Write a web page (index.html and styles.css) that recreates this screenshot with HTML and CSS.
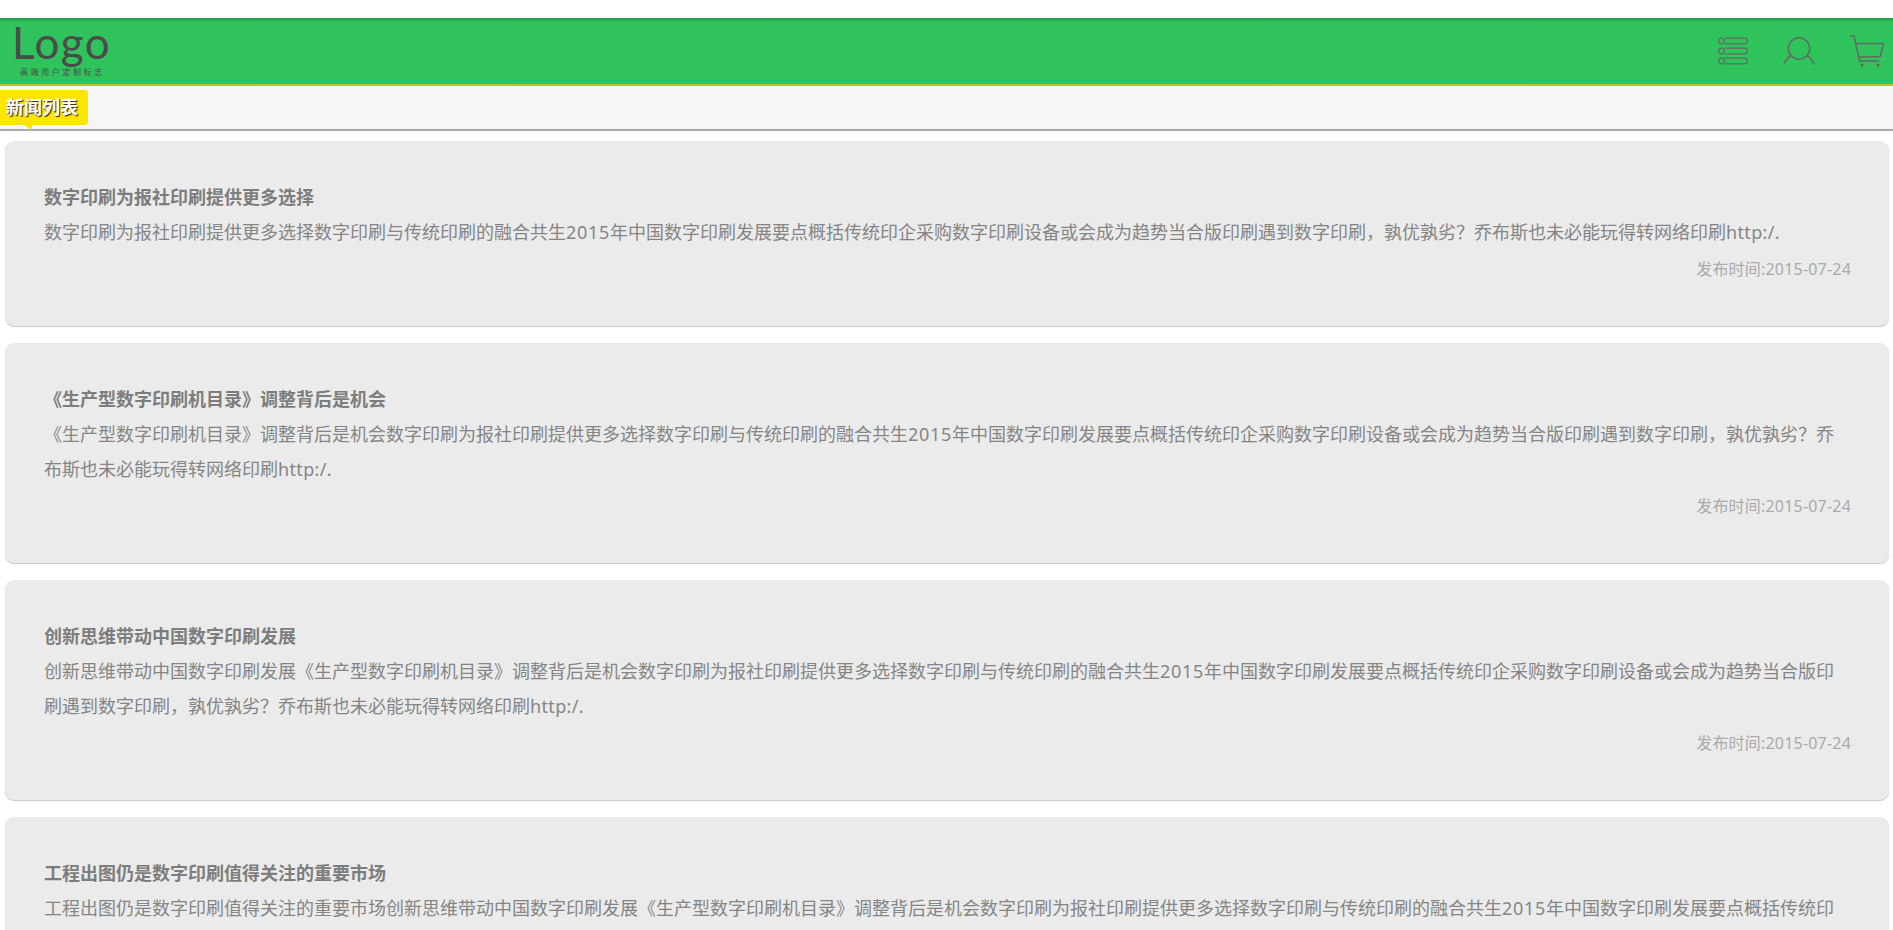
FILE: index.html
```html
<!DOCTYPE html>
<html lang="zh-CN">
<head>
<meta charset="utf-8">
<title>新闻列表</title>
<link rel="stylesheet" href="styles.css">
</head>
<body>
<header class="header">
  <div class="logo">
    <div class="logo-word">Logo</div>
    <div class="logo-sub">高端用户定制标志</div>
  </div>
  <nav class="icons">
    <svg class="icon" width="30" height="28" viewBox="0 0 30 28" fill="none" stroke="#626a64" stroke-width="1.3">
      <circle cx="3.500" cy="4" r="2.800"/><path d="M7 1.200H26.500A2.800 2.800 0 0 1 26.500 6.800H7"/>
      <circle cx="3.500" cy="14" r="2.800"/><path d="M7 11.200H26.500A2.800 2.800 0 0 1 26.500 16.800H7"/>
      <circle cx="3.500" cy="24" r="2.800"/><path d="M7 21.200H26.500A2.800 2.800 0 0 1 26.500 26.800H7"/>
    </svg>
    <svg class="icon" width="32" height="28" viewBox="0 0 32 28" fill="none" stroke="#626a64" stroke-width="1.500">
      <circle cx="16" cy="11.500" r="10.700"/><path d="M.7 27.500C2.500 23 5 20 8.500 18.500M31.300 27.500C29.500 23 27 20 23.500 18.500"/>
    </svg>
    <svg class="icon" width="34" height="32" viewBox="0 0 34 32" fill="none" stroke="#626a64" stroke-width="1.500">
      <path d="M0 .8H4L9.500 26H29M5.800 8.500H33.300L30.300 21.500L8.500 22"/>
      <circle cx="12" cy="30" r="1.500" fill="#626a64" stroke="none"/><circle cx="28" cy="30" r="1.500" fill="#626a64" stroke="none"/>
    </svg>
  </nav>
</header>
<div class="subbar">
  <span class="tag">新闻列表</span>
</div>
<main class="list">
  <article class="card">
    <h2 class="card-title">数字印刷为报社印刷提供更多选择</h2>
    <p class="card-text">数字印刷为报社印刷提供更多选择数字印刷与传统印刷的融合共生<span class="year">2015</span>年中国数字印刷发展要点概括传统印企采购数字印刷设备或会成为趋势当合版印刷遇到数字印刷，孰优孰劣？乔布斯也未必能玩得转网络印刷<span class="url">http:/.</span></p>
    <div class="card-date">发布时间:2015-07-24</div>
  </article>
  <article class="card">
    <h2 class="card-title">《生产型数字印刷机目录》调整背后是机会</h2>
    <p class="card-text">《生产型数字印刷机目录》调整背后是机会数字印刷为报社印刷提供更多选择数字印刷与传统印刷的融合共生<span class="year">2015</span>年中国数字印刷发展要点概括传统印企采购数字印刷设备或会成为趋势当合版印刷遇到数字印刷，孰优孰劣？乔布斯也未必能玩得转网络印刷<span class="url">http:/.</span></p>
    <div class="card-date">发布时间:2015-07-24</div>
  </article>
  <article class="card">
    <h2 class="card-title">创新思维带动中国数字印刷发展</h2>
    <p class="card-text">创新思维带动中国数字印刷发展《生产型数字印刷机目录》调整背后是机会数字印刷为报社印刷提供更多选择数字印刷与传统印刷的融合共生<span class="year">2015</span>年中国数字印刷发展要点概括传统印企采购数字印刷设备或会成为趋势当合版印刷遇到数字印刷，孰优孰劣？乔布斯也未必能玩得转网络印刷<span class="url">http:/.</span></p>
    <div class="card-date">发布时间:2015-07-24</div>
  </article>
  <article class="card">
    <h2 class="card-title">工程出图仍是数字印刷值得关注的重要市场</h2>
    <p class="card-text">工程出图仍是数字印刷值得关注的重要市场创新思维带动中国数字印刷发展《生产型数字印刷机目录》调整背后是机会数字印刷为报社印刷提供更多选择数字印刷与传统印刷的融合共生<span class="year">2015</span>年中国数字印刷发展要点概括传统印企采购数字印刷设备或会成为趋势当合版印刷遇到数字印刷，孰优孰劣？乔布斯也未必能玩得转网络印刷<span class="url">http:/.</span></p>
    <div class="card-date">发布时间:2015-07-24</div>
  </article>
</main>
</body>
</html>
```
FILE: styles.css
```css
* { box-sizing: border-box; }
html, body { height: 930px; overflow: hidden; }
body {
  margin: 0;
  padding-top: 18px;
  background: #fff;
  font-family: "Noto Sans", "Noto Sans CJK SC", sans-serif;
  color: #777;
}
.header {
  height: 68px;
  display: flex;
  justify-content: space-between;
  align-items: center;
  padding: 0 9px 0 12px;
  background-color: #2ec35b;
  background-image:
    linear-gradient(to bottom, rgba(0,0,0,.22), rgba(0,0,0,0) 4px),
    repeating-linear-gradient(to right, rgba(255,255,255,.015) 0 1px, transparent 1px 8px),
    repeating-linear-gradient(to bottom, rgba(255,255,255,.015) 0 1px, transparent 1px 8px);
  border-bottom: 2px solid #c8b832;
}
.logo { color: #4b4b4b; width: 100px; align-self: flex-start; margin-top: 1px; }
.logo-word {
  font-family: Lato, sans-serif;
  font-size: 44px;
  line-height: 46px;
  letter-spacing: 1.500px;
}
.logo-sub {
  font-size: 8px;
  line-height: 10px;
  letter-spacing: 2.600px;
  white-space: nowrap;
  margin-top: 2px;
  margin-left: 8px;
}
.icons { display: flex; align-items: center; gap: 35px; }
.icon { display: block; }
.subbar {
  height: 45px;
  background: #f6f6f6;
  border-bottom: 2px solid #aaa;
  padding-top: 4px;
}
.tag {
  position: relative;
  display: block;
  width: 88px;
  height: 35px;
  padding-left: 6px;
  background: #fde500;
  border-radius: 0 3px 3px 0;
  color: #fff;
  font-size: 18px;
  font-weight: 700;
  line-height: 35px;
  text-shadow: 1px 1px 1px #222;
  white-space: nowrap;
}
.tag::after {
  content: "";
  position: absolute;
  left: 24px;
  top: 35px;
  border-top: 5px solid #fde500;
  border-left: 8px solid transparent;
}
.list {
  display: flex;
  flex-direction: column;
  gap: 17px;
  padding: 10px 4px 0 5px;
}
.card {
  background: #ebebeb;
  border-radius: 9px;
  box-shadow: 0 1px 1px rgba(0,0,0,.22);
  padding: 38px 38px 44.800px 39px;
  flex: none;
}
.card-title {
  margin: 0;
  font-size: 18px;
  font-weight: 700;
  line-height: 36px;
  color: #7d7d7d;
}
.card-text {
  margin: 0;
  font-size: 18px;
  line-height: 35.700px;
  color: #858585;
}
.year { letter-spacing: .7px; }
.url { letter-spacing: .35px; }
.card-date {
  margin-top: 6px;
  font-size: 16px;
  line-height: 24px;
  letter-spacing: .2px;
  text-align: right;
  color: #aaa;
}
```
